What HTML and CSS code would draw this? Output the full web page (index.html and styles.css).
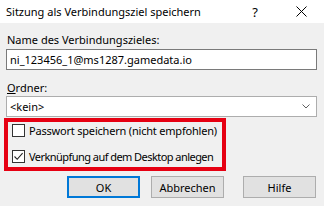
FILE: index.html
```html
<!DOCTYPE html>
<html lang="de">
<head>
<meta charset="utf-8">
<title>Sitzung als Verbindungsziel speichern</title>
<link rel="stylesheet" href="styles.css">
</head>
<body>
<div class="dialog">
  <div class="titlebar">
    <span class="title">Sitzung als Verbindungsziel speichern</span>
    <span class="tb-help">?</span>
    <span class="tb-close"><svg width="11" height="11" viewBox="0 0 11 11"><path d="M0.5 0.5L10.5 10.5M10.5 0.5L0.5 10.5" stroke="#000" stroke-width="1" fill="none"/></svg></span>
  </div>
  <div class="content">
    <div class="label">Name des Verbindungszieles:</div>
    <div class="input">ni_123456_1@ms1287.gamedata.io</div>
    <div class="label label-ordner"><u>O</u>rdner:</div>
    <div class="select">
      <span>&lt;kein&gt;</span>
      <svg class="chev" width="8" height="5" viewBox="0 0 8 5"><path d="M0.5 0.5L4 4L7.5 0.5" stroke="#606060" fill="none"/></svg>
    </div>
    <div class="highlight">
      <div class="check-row">
        <span class="box"></span>
        <span class="check-label">Passwort speichern (nicht empfohlen)</span>
      </div>
      <div class="check-row">
        <span class="box"><svg width="11" height="11" viewBox="0 0 11 11"><path d="M1.5 5.5L4.2 8.3L9.6 2.2" stroke="#222" stroke-width="1.1" fill="none"/></svg></span>
        <span class="check-label check-label-tight">Verknüpfung auf dem Desktop anlegen</span>
      </div>
    </div>
    <div class="buttons">
      <div class="btn btn-default">OK</div>
      <div class="btn">Abbrechen</div>
      <div class="btn btn-help">Hilfe</div>
    </div>
  </div>
</div>
</body>
</html>
```

FILE: styles.css
```css
html, body {
  margin: 0;
  padding: 0;
}
body {
  width: 324px;
  height: 206px;
  overflow: hidden;
  background: #f0f0f0;
  font-family: "Noto Sans", "Open Sans", sans-serif;
  font-size: 11px;
  color: #000;
}
.dialog {
  display: flex;
  flex-direction: column;
  height: 206px;
}
.titlebar {
  height: 23px;
  flex: none;
  background: #fff;
  display: flex;
  align-items: center;
  padding-left: 6px;
}
.title {
  flex: 1;
  font-size: 11px;
}
.tb-help {
  width: 46px;
  text-align: center;
  font-size: 13px;
}
.tb-close {
  width: 46px;
  display: flex;
  justify-content: center;
}
.content {
  padding: 10px 7px 0 6px;
  display: flex;
  flex-direction: column;
}
.label {
  padding-left: 1px;
  line-height: 14px;
  height: 14px;
}
.input {
  margin-top: 2px;
  height: 19px;
  border: 1px solid #7a7a7a;
  background: #fff;
  padding-left: 3px;
  line-height: 19px;
}
.label-ordner {
  margin-top: 11px;
}
.select {
  margin-top: 1px;
  height: 19px;
  border: 1px solid #adadad;
  background: #fff;
  padding: 0 6px 0 3px;
  display: flex;
  align-items: center;
  justify-content: space-between;
}
.highlight {
  margin: 1px 0 0 -2px;
  width: 210px;
  border: 4px solid #e60012;
  padding: 2px 0 4px 4px;
  display: flex;
  flex-direction: column;
  gap: 13px;
  white-space: nowrap;
}
.check-row {
  display: flex;
  align-items: center;
  gap: 4px;
  height: 13px;
  line-height: 13px;
}
.check-label {
  letter-spacing: -0.2px;
}
.check-label-tight {
  letter-spacing: -0.55px;
}
.box {
  flex: none;
  width: 11px;
  height: 11px;
  border: 1px solid #333;
  background: #fff;
  display: flex;
}
.buttons {
  margin-top: 5px;
  display: flex;
  padding-left: 61px;
}
.btn {
  box-sizing: border-box;
  width: 73px;
  height: 22px;
  border: 1px solid #adadad;
  background: #e1e1e1;
  display: flex;
  align-items: center;
  justify-content: center;
}
.btn-default {
  border: 2px solid #0078d7;
  margin-right: 11px;
}
.btn-help {
  margin-left: 19px;
}
```
